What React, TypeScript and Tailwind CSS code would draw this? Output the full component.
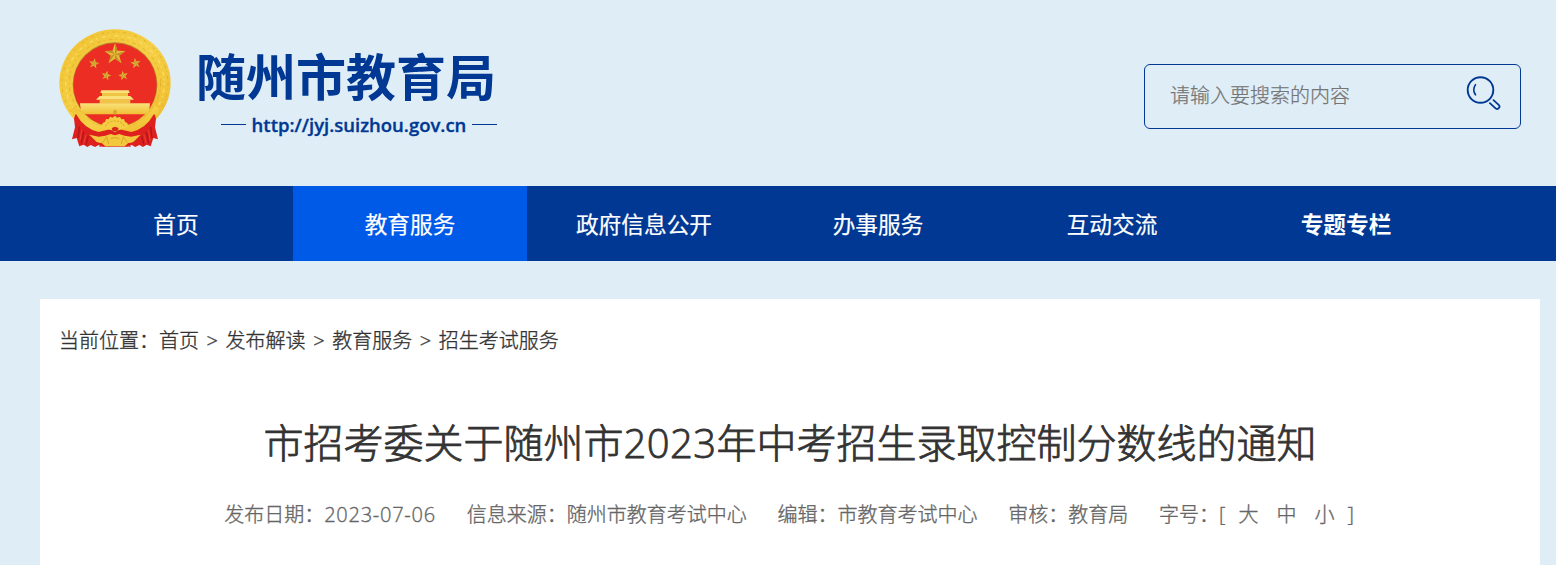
import React from 'react';

const STAR = "M0,-1 L0.235,-0.324 L0.951,-0.309 L0.38,0.124 L0.588,0.809 L0,0.4 L-0.588,0.809 L-0.38,0.124 L-0.951,-0.309 L-0.235,-0.324 Z";

const Emblem = () => {
  const stars = [
    { x: 195, y: 103, r: 33, rotate: 0 },
    { x: 132, y: 131, r: 16, rotate: 10 },
    { x: 257, y: 130, r: 16, rotate: -10 },
    { x: 169, y: 167, r: 15, rotate: 12 },
    { x: 220, y: 167, r: 15, rotate: -12 },
  ];

  return (
    <svg viewBox="27 27 336 357" className="w-28 h-[119px]">
      <defs>
        <linearGradient id="gold" x1="0" y1="0" x2="1" y2="1">
          <stop offset="0" stopColor="#f0c233" />
          <stop offset="0.5" stopColor="#f5d046" />
          <stop offset="1" stopColor="#eeb92c" />
        </linearGradient>
        <linearGradient id="gate" x1="0" y1="0" x2="0" y2="1">
          <stop offset="0" stopColor="#fae27a" />
          <stop offset="1" stopColor="#f0bf33" />
        </linearGradient>
      </defs>

      {/* wreath */}
      <ellipse cx="195" cy="189" rx="167" ry="161" fill="url(#gold)" />
      <ellipse cx="195" cy="189" rx="159" ry="153" fill="none" stroke="#e3b02c" strokeWidth="3" strokeDasharray="9 9 3 12" />
      <ellipse cx="195" cy="189" rx="148" ry="142" fill="none" stroke="#f9dd62" strokeWidth="4" strokeDasharray="5 13 12 9" />
      <ellipse cx="195" cy="189" rx="137" ry="131" fill="none" stroke="#e6b12c" strokeWidth="3" strokeDasharray="11 9 4 12" />
      <circle cx="195" cy="194" r="127" fill="#b9832a" />
      <circle cx="195" cy="195" r="125" fill="#ec2d24" />

      {stars.map((star, index) => (
        <g key={index} transform={`translate(${star.x} ${star.y}) rotate(${star.rotate}) scale(${star.r})`}>
          <path d={STAR} fill="#e9bd35" />
          <path d="M0,0 L0,-1 L0.235,-0.324 Z M0,0 L0.951,-0.309 L0.38,0.124 Z M0,0 L0.588,0.809 L0,0.4 Z M0,0 L-0.588,0.809 L-0.38,0.124 Z M0,0 L-0.951,-0.309 L-0.235,-0.324 Z" fill="#c0912c" />
        </g>
      ))}

      {/* gate */}
      <path d="M154,211 H236 L239,219 H151 Z" fill="#fae27a" />
      <rect x="156" y="219" width="78" height="9" fill="#f0c444" />
      <path d="M149,228 H241 L252,239 H138 Z" fill="#fae27a" />
      <rect x="149" y="239" width="92" height="12" fill="#f0c444" />
      <path d="M90,250 H300 L296,283 H94 Z" fill="url(#gate)" />
      <path d="M190,283 V274 A5,5 0 0 1 200,274 V283 Z" fill="#dda42e" />

      {/* ribbons */}
      <path d="M77,280 L72,296 L75,322 L66,358 L80,354 L88,379 L101,374 L112,381 L122,375 L135,381 L146,375 L160,380 H230 L245,375 L256,381 L268,375 L279,381 L290,374 L302,379 L310,354 L324,358 L315,322 L318,296 L313,280 L285,300 Q195,345 105,300 Z" fill="#de211e" />
      <path d="M88,320 L84,354 M101,336 L94,370 M115,348 L108,374 M302,320 L306,354 M289,336 L296,370 M275,348 L282,374" fill="none" stroke="#b3151a" strokeWidth="4" />
      <path d="M95,330 L90,362 M108,344 L101,370 M295,330 L300,362 M282,344 L289,370" fill="none" stroke="#f13b30" strokeWidth="3" />

      {/* lower wreath, gear and tassel */}
      <path d="M62,268 L76,256 Q104,306 150,316 L195,322 L240,316 Q286,306 314,256 L328,268 L320,288 L312,282 Q288,326 244,336 L210,328 L195,337 L180,328 L146,336 Q102,326 78,282 L70,288 Z" fill="url(#gold)" />
      <path d="M153,320 L159,308 L165,306 L168,297 L176,298 L180,290 L188,293 L195,287 L202,293 L210,290 L214,298 L222,297 L225,306 L231,308 L237,320 L210,329 H180 Z" fill="#f4cd40" />
      <path d="M167,319 A29,22 0 0 1 223,319" fill="none" stroke="#d99f2b" strokeWidth="3" strokeDasharray="6 4" />
      <path d="M185,324 L195,320 L206,324 L202,334 H188 Z" fill="#d7281c" />
      <path d="M118,344 L146,350 L166,347 L182,342 L195,346 L208,342 L224,347 L244,350 L272,344 L250,366 L236,370 L228,379 H163 L154,370 L140,366 Z" fill="#f2c93c" />
      <path d="M158,368 L170,350 L176,372 M232,368 L220,350 L214,372 M182,356 Q195,349 208,356" fill="none" stroke="#dca42c" strokeWidth="3" />
      <path d="M147,380 L154,368 L166,379 Z M243,380 L236,368 L224,379 Z" fill="#de211e" />
    </svg>
  );
};

const SearchIcon = () => (
  <svg viewBox="0 0 36 36" className="w-9 h-9" fill="none" stroke="#003893" strokeLinecap="round">
    <circle cx="15.5" cy="15" r="12.8" strokeWidth="1.9" />
    <path d="M10.5 9.6 Q7.1 14.6 10.5 19.8" strokeWidth="1.6" />
    <path d="M24.9 28.2 L30.3 33.2 A2.3 2.3 0 0 0 33.7 29.8 L28.5 25.2" strokeWidth="1.8" />
  </svg>
);

const App = () => {
  const navItems = [
    { label: "首页" },
    { label: "教育服务", active: true },
    { label: "政府信息公开" },
    { label: "办事服务" },
    { label: "互动交流" },
    { label: "专题专栏", bold: true },
  ];

  const crumbs = ["首页", "发布解读", "教育服务", "招生考试服务"];

  return (
    <div className="h-[565px] overflow-hidden bg-[#dfedf7] font-['Open_Sans','Noto_Sans_CJK_SC',sans-serif]">
      <header className="flex h-[186px] items-start justify-between pl-[59px] pr-[35px]">
        <div className="flex pt-[29px]">
          <Emblem />
          <div className="ml-[25px] pt-[17px] text-[#003893]">
            <h1 className="h-[62px] whitespace-nowrap text-[50px] font-bold leading-[62px]">随州市教育局</h1>
            <div className="-mr-px flex h-[33px] items-center justify-end gap-[5px] text-[18.5px] font-semibold leading-8">
              <span className="h-px w-[25px] bg-[#003893]" />
              <span className="w-[216px] whitespace-nowrap text-center [-webkit-text-stroke:0.35px_#003893]">http://jyj.suizhou.gov.cn</span>
              <span className="h-px w-[25px] bg-[#003893]" />
            </div>
          </div>
        </div>
        <div className="mt-16 flex h-[65px] w-[377px] items-center justify-between rounded-md border border-[#003893] pl-[25px] pr-[19px]">
          <input
            type="text"
            placeholder="请输入要搜索的内容"
            className="-mt-0.5 w-60 bg-transparent text-xl font-light outline-none [-webkit-text-stroke:0.25px_#757575] placeholder:text-[#757575]"
          />
          <button type="button" className="-mt-[7px]">
            <SearchIcon />
          </button>
        </div>
      </header>

      <nav className="flex h-[75px] bg-[#003893] pl-[59px]">
        {navItems.map((item) => (
          <a
            key={item.label}
            href="#"
            className={`w-[234px] text-center text-[22.7px] leading-[77px] text-white ${item.active ? "h-full bg-[#005ae8]" : ""} ${item.bold ? "font-bold" : "[-webkit-text-stroke:0.2px_#fff]"}`}
          >
            {item.label}
          </a>
        ))}
      </nav>

      <main className="ml-10 mt-[38px] h-[266px] w-[1500px] bg-white">
        <div className="flex pl-[19px] pt-[22px] text-xl font-light leading-10 text-[#333] [-webkit-text-stroke:0.35px_#333]">
          <span>当前位置：</span>
          {crumbs.map((crumb, index) => (
            <React.Fragment key={crumb}>
              {index > 0 && <span className="w-[26.6px] text-center">&gt;</span>}
              <a href="#">{crumb}</a>
            </React.Fragment>
          ))}
        </div>
        <h2 className="mt-[52px] text-center text-[40px] font-light leading-[60px] text-[#333] [-webkit-text-stroke:0.8px_#333]">
          市招考委关于随州市<span className="tracking-[0.4px]">2023</span>年中考招生录取控制分数线的通知
        </h2>
        <div className="mt-[22px] flex justify-center gap-[30.8px] pr-0.5 text-xl font-light leading-10 text-[#666] [-webkit-text-stroke:0.35px_#666]">
          <span>发布日期：<span className="tracking-[0.75px]">2023-07-06</span></span>
          <span>信息来源：随州市教育考试中心</span>
          <span>编辑：市教育考试中心</span>
          <span>审核：教育局</span>
          <div className="flex">
            <span>字号：[</span>
            <a href="#" className="ml-[13px]">大</a>
            <a href="#" className="ml-[18px]">中</a>
            <a href="#" className="ml-[18px]">小</a>
            <span className="ml-[13px]">]</span>
          </div>
        </div>
      </main>
    </div>
  );
};

export default App;
